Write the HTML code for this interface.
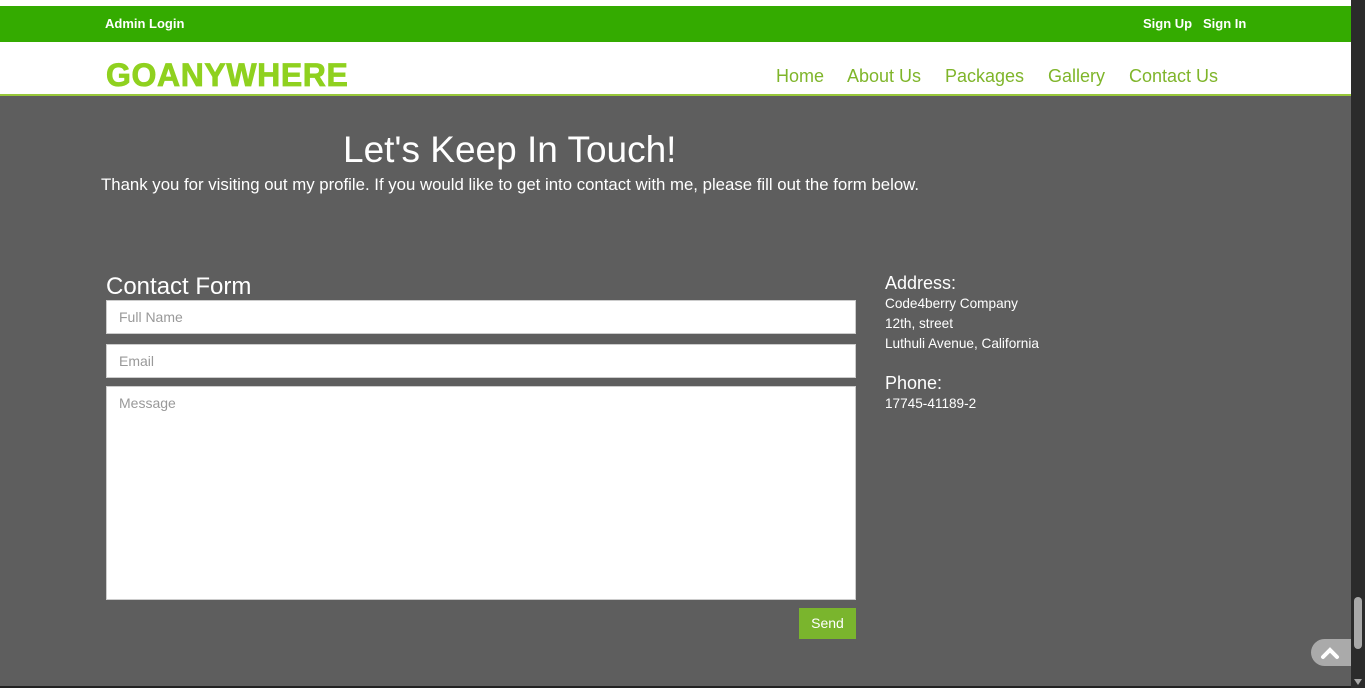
<!DOCTYPE html>
<html><head><meta charset="utf-8"><style>
*{margin:0;padding:0;box-sizing:border-box}
body{width:1365px;height:688px;overflow:hidden;background:#fff;font-family:"Liberation Sans",Arial,sans-serif;position:relative}
.top{position:absolute;top:6px;left:0;width:1351px;height:36px;background:#34ab00;color:#fff;font-weight:bold;font-size:13px}
.top span{position:absolute;top:10px}
.hdr{position:absolute;top:42px;left:0;width:1351px;height:52px;background:#fff}
.logo{position:absolute;left:106px;top:15px;font-size:32px;font-weight:bold;color:#8fd11f;letter-spacing:0.6px;-webkit-text-stroke:0.8px #8fd11f}
.nav{position:absolute;top:24px;font-size:18px;color:#7fb52a}
.line{position:absolute;top:94px;left:0;width:1351px;height:2px;background:#98c73a}
.main{position:absolute;top:96px;left:0;width:1351px;height:590px;background:#5e5e5e;color:#fff}
h1{position:absolute;left:343px;top:33px;font-size:37px;font-weight:normal}
.intro{position:absolute;left:101px;top:79px;font-size:16.8px}
.cf{position:absolute;left:106px;top:177px;font-size:24px}
.in{position:absolute;left:106px;width:750px;background:#fff;border:1px solid #ccc;color:#999;font-size:14px;padding:0 12px}
.send{position:absolute;left:799px;top:512px;width:57px;height:31px;background:#7ab52d;color:#fff;font-size:14px;text-align:center;line-height:31px}
.h3{position:absolute;left:885px;font-size:18px}
.t{position:absolute;left:885px;font-size:13.6px;line-height:20px}
.sb{position:absolute;top:0;left:1351px;width:14px;height:688px;background:#2b2b2b}
.thumb{position:absolute;left:1354px;top:597px;width:8px;height:52px;background:#a8a8a8;border-radius:4px}
.up{position:absolute;left:1311px;top:639px;width:40px;height:27px;background:#aaa;border-radius:14px 0 0 14px}
.bot{position:absolute;left:0;top:686px;width:1351px;height:2px;background:#222}
</style></head><body>
<div class="top"><span style="left:105px">Admin Login</span><span style="left:1143px">Sign Up</span><span style="left:1203px">Sign In</span></div>
<div class="hdr"><div class="logo">GOANYWHERE</div>
<span class="nav" style="left:776px">Home</span><span class="nav" style="left:847px">About Us</span><span class="nav" style="left:945px">Packages</span><span class="nav" style="left:1048px">Gallery</span><span class="nav" style="left:1129px">Contact Us</span></div>
<div class="line"></div>
<div class="main">
<h1>Let's Keep In Touch!</h1>
<div class="intro">Thank you for visiting out my profile. If you would like to get into contact with me, please fill out the form below.</div>
<div class="cf">Contact Form</div>
<div class="in" style="top:204px;height:34px;line-height:32px">Full Name</div>
<div class="in" style="top:248px;height:34px;line-height:32px">Email</div>
<div class="in" style="top:290px;height:214px;padding-top:8px">Message</div>
<div class="send">Send</div>
<div class="h3" style="top:177px">Address:</div>
<div class="t" style="top:198px">Code4berry Company<br>12th, street<br>Luthuli Avenue, California</div>
<div class="h3" style="top:277px">Phone:</div>
<div class="t" style="top:298px">17745-41189-2</div>
</div>
<div class="bot"></div>
<div class="up"><svg width="40" height="27"><path d="M12 18 L19 11 L26 18" stroke="#fff" stroke-width="4" fill="none" stroke-linecap="round"/></svg></div>
<div class="sb"><svg width="14" height="688"><path d="M3 679 L11 679 L7 685Z" fill="#a8a8a8"/></svg></div>
<div class="thumb"></div>
</body></html>
